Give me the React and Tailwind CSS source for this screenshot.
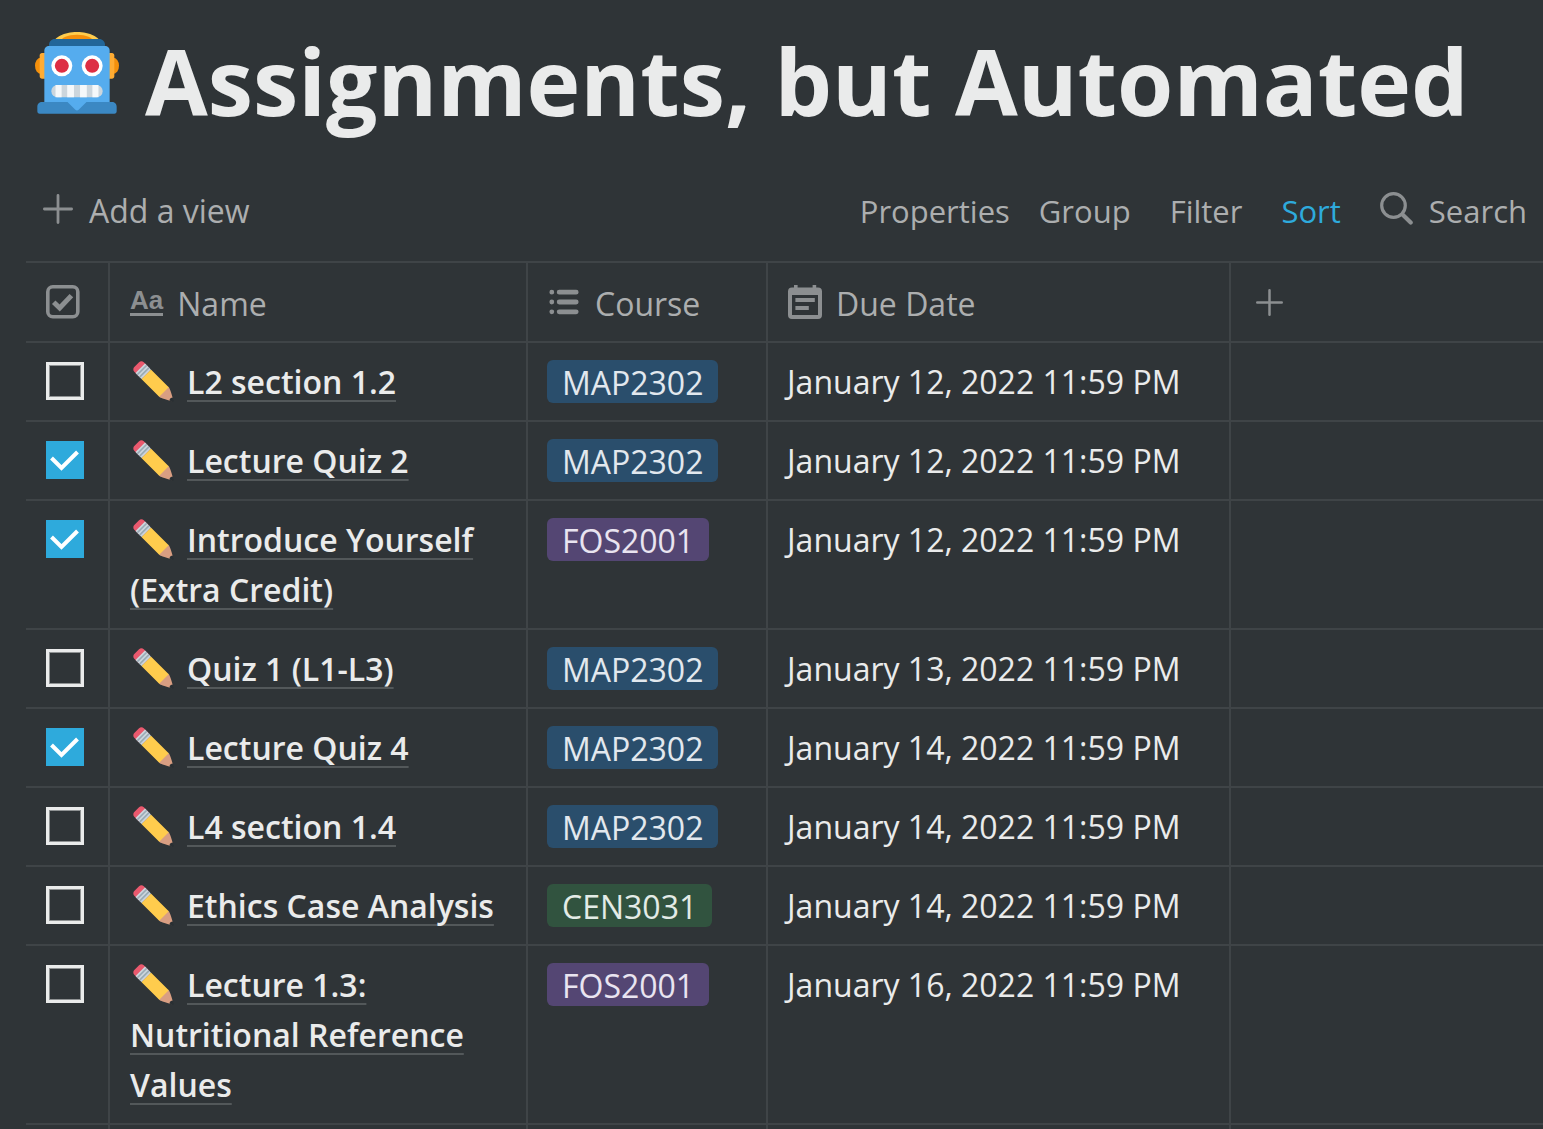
import React, { useState } from "react";

const TAG_COLORS = {
  MAP2302: "bg-[#2a4e6c] text-[#e2e8ee]",
  FOS2001: "bg-[#544673] text-[#e9e4f0]",
  CEN3031: "bg-[#31533f] text-[#e3ebe6]",
};

const ASSIGNMENTS = [
  { name: "L2 section 1.2", course: "MAP2302", due: "January 12, 2022 11:59 PM", done: false },
  { name: "Lecture Quiz 2", course: "MAP2302", due: "January 12, 2022 11:59 PM", done: true },
  { name: "Introduce Yourself (Extra Credit)", course: "FOS2001", due: "January 12, 2022 11:59 PM", done: true },
  { name: "Quiz 1 (L1-L3)", course: "MAP2302", due: "January 13, 2022 11:59 PM", done: false },
  { name: "Lecture Quiz 4", course: "MAP2302", due: "January 14, 2022 11:59 PM", done: true },
  { name: "L4 section 1.4", course: "MAP2302", due: "January 14, 2022 11:59 PM", done: false },
  { name: "Ethics Case Analysis", course: "CEN3031", due: "January 14, 2022 11:59 PM", done: false },
  { name: "Lecture 1.3: Nutritional Reference Values", course: "FOS2001", due: "January 16, 2022 11:59 PM", done: false },
];

function Robot() {
  return (
    <svg viewBox="0 0 36 36" className="size-[84px] shrink-0" aria-hidden="true">
      <ellipse cx="33.5" cy="14.5" rx="2.5" ry="3.5" fill="#F4900C" />
      <ellipse cx="2.5" cy="14.5" rx="2.5" ry="3.5" fill="#F4900C" />
      <path fill="#FFAC33" d="M34 19c0 .553-.447 1-1 1h-3c-.553 0-1-.447-1-1v-9c0-.552.447-1 1-1h3c.553 0 1 .448 1 1v9zM7 19c0 .553-.448 1-1 1H3c-.552 0-1-.447-1-1v-9c0-.552.448-1 1-1h3c.552 0 1 .448 1 1v9z" />
      <path fill="#FFCC4D" d="M28 5c0 2.761-4.478 4-10 4C12.477 9 8 7.761 8 5s4.477-5 10-5c5.522 0 10 2.239 10 5z" />
      <path fill="#F4900C" d="M25 4.083C25 5.694 21.865 7 18 7c-3.866 0-7-1.306-7-2.917 0-1.611 3.134-2.917 7-2.917 3.865 0 7 1.306 7 2.917z" />
      <path fill="#226699" d="M30 5.5C30 6.881 28.881 7 27.5 7h-19C7.119 7 6 6.881 6 5.5S7.119 3 8.5 3h19C28.881 3 30 4.119 30 5.5z" />
      <path fill="#55ACEE" d="M30 6H6c-1.104 0-2 .896-2 2v26h28V8c0-1.104-.896-2-2-2z" />
      <path fill="#3B88C3" d="M35 34v-2c0-1.104-.896-2-2-2H22.071l-3.364 3.364c-.391.391-1.023.391-1.414 0L13.929 30H3c-1.104 0-2 .896-2 2v2c0 .6.4 1 1 1h32c.6 0 1-.4 1-1z" />
      <circle cx="11.5" cy="14.5" r="4.5" fill="#fff" />
      <circle cx="24.5" cy="14.5" r="4.5" fill="#fff" />
      <circle cx="11.5" cy="14.5" r="3" fill="#DD2E44" />
      <circle cx="24.5" cy="14.5" r="3" fill="#DD2E44" />
      <rect x="7" y="22.7" width="22" height="5.3" rx="2.6" fill="#CCD6DD" />
      <path fill="#F5F8FA" d="M8.8 22.7h2.6V28H8.8zM13.8 22.7h2.9V28h-2.9zM19.3 22.7h2.9V28h-2.9zM24.6 22.7h2.6V28h-2.6z" />
    </svg>
  );
}

function Pencil() {
  return (
    <svg viewBox="0 0 36 36" className="mr-[13px] ml-[3px] inline-block size-[41px] align-[-8px]" aria-hidden="true">
      <path fill="#D99E82" d="M35.222 33.598c-.647-2.101-1.705-6.059-2.325-7.566-.501-1.216-.969-2.438-1.544-3.014-.575-.575-1.553-.53-2.143.058 0 0-2.469 1.675-3.354 2.783-1.108.882-2.785 3.357-2.785 3.357-.59.59-.635 1.567-.06 2.143.576.575 1.798 1.043 3.015 1.544 1.506.62 5.465 1.676 7.566 2.325.359.11 1.74-1.271 1.63-1.63z" />
      <path fill="#EA596E" d="M13.643 5.308c1.151 1.151 1.151 3.016 0 4.167l-4.167 4.168c-1.151 1.15-3.018 1.15-4.167 0L1.141 9.475c-1.15-1.151-1.15-3.016 0-4.167l4.167-4.167c1.15-1.151 3.016-1.151 4.167 0l4.168 4.167z" />
      <path fill="#FFCC4D" d="M31.353 23.018l-4.17 4.17-4.163 4.165L7.392 15.726l8.335-8.334 15.626 15.626z" />
      <path fill="#292F33" d="M32.078 34.763s2.709 1.489 3.441.757c.732-.732-.765-3.435-.765-3.435s-2.566.048-2.676 2.678z" />
      <path fill="#CCD6DD" d="M2.183 10.517l8.335-8.335 5.208 5.209-8.334 8.335z" />
      <path fill="#99AAB5" d="M3.225 11.558l8.334-8.334 1.042 1.042L4.267 12.6zM5.308 13.644l8.335-8.335 1.042 1.042-8.335 8.334z" />
    </svg>
  );
}

function Plus({ className }) {
  return (
    <svg viewBox="0 0 28 28" className={className} fill="none" stroke="#8c8f91" strokeWidth="2.6" strokeLinecap="round" aria-hidden="true">
      <path d="M14 1.3v25.4M1.3 14h25.4" />
    </svg>
  );
}

function SearchIcon() {
  return (
    <svg viewBox="0 0 33 33" className="mb-1.5 size-[33px]" fill="none" stroke="#8c8f91" strokeLinecap="round" aria-hidden="true">
      <circle cx="13.5" cy="13.5" r="11.8" strokeWidth="3.2" />
      <path d="M22.5 22.5l8.2 8" strokeWidth="4.2" />
    </svg>
  );
}

function CheckboxIcon() {
  return (
    <svg viewBox="0 0 34 34" className="size-[34px]" fill="none" stroke="#8c8f91" role="img" aria-label="Done">
      <rect x="1.8" y="1.8" width="30" height="30" rx="5" strokeWidth="3.6" />
      <path d="M7.7 17.2l6 5.8L25.4 10.6" strokeWidth="5" />
    </svg>
  );
}

function ListIcon() {
  return (
    <svg viewBox="0 0 33 26" className="h-[26px] w-[33px]" stroke="#8c8f91" strokeWidth="4.8" strokeLinecap="round" aria-hidden="true">
      <path d="M3.8 3.2h.01M3.8 13h.01M3.8 22.8h.01M11.2 3.2h17M11.2 13h17M11.2 22.8h17" />
    </svg>
  );
}

function CalendarIcon() {
  return (
    <svg viewBox="0 0 34 34" className="size-[34px]" fill="#8c8f91" aria-hidden="true">
      <path fillRule="evenodd" d="M6 0h3.6v2.6h15V0h3.6v2.6H30a4 4 0 0 1 4 4V30a4 4 0 0 1-4 4H4a4 4 0 0 1-4-4V6.6a4 4 0 0 1 4-4h2zM4 10v20h26V10z" />
      <path d="M7.4 13h19.4v4H7.4zM7.4 21h13.4v4H7.4z" />
    </svg>
  );
}

function TitleIcon() {
  return (
    <span aria-hidden="true" className="mb-0.5 border-b-[3px] border-[#8c8f91] font-['Liberation_Sans',sans-serif] text-[26px] leading-[26px] font-bold text-[#8c8f91]">
      Aa
    </span>
  );
}

function Checkbox({ checked, onChange, label }) {
  return (
    <span className="grid size-[38px]">
      <input
        type="checkbox"
        checked={checked}
        onChange={onChange}
        aria-label={label}
        className="col-start-1 row-start-1 size-[38px] appearance-none border-[3px] border-[#eaebeb] inset-ring inset-ring-[#8f9293] checked:border-0 checked:bg-[#2eaadc] checked:inset-ring-0"
      />
      {checked && (
        <svg viewBox="0 0 38 38" className="pointer-events-none col-start-1 row-start-1 size-[38px]" fill="none" stroke="#fff" strokeWidth="4" aria-hidden="true">
          <path d="M5.5 17L15.5 27L31.5 11" />
        </svg>
      )}
    </span>
  );
}

const CELL = "border-r-2 border-b-2 border-[#3f4447]";
const LAST = "border-b-2 border-[#3f4447]";

function HeaderCell({ icon, children }) {
  return (
    <th scope="col" className={CELL + " px-5 py-0 text-left font-normal"}>
      <div className="flex h-[78px] items-center">
        <span className="flex">{icon}</span>
        <span className="ml-3.5 pt-1">{children}</span>
      </div>
    </th>
  );
}

export default function App() {
  const [rows, setRows] = useState(ASSIGNMENTS);
  const toggle = (i) => setRows(rows.map((r, j) => (j === i ? { ...r, done: !r.done } : r)));

  return (
    <main className="min-h-screen overflow-hidden bg-[#2f3437] pl-[26px] font-['Open_Sans','Noto_Sans',sans-serif] text-[32px] leading-[50px] text-[#eaebeb]">
      <header className="flex gap-[26px] pt-8 pl-[9px]">
        <Robot />
        <h1 className="text-[91px] leading-[98px] font-bold whitespace-nowrap">Assignments, but Automated</h1>
      </header>

      <div className="mt-14 flex items-center justify-between pr-4 pl-[17px] text-[#acaeaf]">
        <button type="button" className="flex items-center gap-4">
          <Plus className="mb-1 size-[30px]" />
          Add a view
        </button>
        <div className="flex items-center gap-[39px] text-[31px]">
          <div className="flex gap-[29px]">
            <button type="button">Properties</button>
            <button type="button">Group</button>
          </div>
          <button type="button">Filter</button>
          <button type="button" className="text-[#2eaadc]">Sort</button>
          <button type="button" className="flex items-center gap-4">
            <SearchIcon />
            Search
          </button>
        </div>
      </div>

      <table className="mt-[25px] w-full table-fixed border-separate border-spacing-0 border-t-2 border-[#3f4447]">
        <colgroup>
          <col className="w-[84px]" />
          <col className="w-[418px]" />
          <col className="w-[240px]" />
          <col className="w-[463px]" />
          <col />
        </colgroup>
        <thead className="text-[#acaeaf]">
          <tr>
            <th scope="col" className={CELL + " py-0 pl-5"}>
              <CheckboxIcon />
            </th>
            <HeaderCell icon={<TitleIcon />}>Name</HeaderCell>
            <HeaderCell icon={<ListIcon />}>Course</HeaderCell>
            <HeaderCell icon={<CalendarIcon />}>Due Date</HeaderCell>
            <th scope="col" className={LAST + " py-0 pl-[25px]"}>
              <button type="button" aria-label="Add a property" className="flex">
                <Plus className="size-[27px]" />
              </button>
            </th>
          </tr>
        </thead>
        <tbody>
          {rows.map((row, i) => (
            <tr key={row.name} className="align-top">
              <td className={CELL + " pt-[19px] pl-5"}>
                <Checkbox checked={row.done} onChange={() => toggle(i)} label={row.name} />
              </td>
              <td className={CELL + " pt-3.5 pr-5 pb-[13px] pl-5 font-semibold"}>
                <Pencil />
                <a href="#" className="underline decoration-[#53585a] decoration-2 underline-offset-[6px] [text-decoration-skip-ink:none]">
                  {row.name}
                </a>
              </td>
              <td className={CELL + " pt-[17px] pl-[19px]"}>
                <span className={TAG_COLORS[row.course] + " block w-fit rounded-md px-[15px] pt-0.5 leading-[41px]"}>{row.course}</span>
              </td>
              <td className={CELL + " pt-3.5 pl-[19px]"}>{row.due}</td>
              <td className={LAST} />
            </tr>
          ))}
          <tr className="h-1">
            <td className="border-r-2 border-[#3f4447] p-0" />
            <td className="border-r-2 border-[#3f4447] p-0" />
            <td className="border-r-2 border-[#3f4447] p-0" />
            <td className="border-r-2 border-[#3f4447] p-0" />
            <td className="p-0" />
          </tr>
        </tbody>
      </table>
    </main>
  );
}
